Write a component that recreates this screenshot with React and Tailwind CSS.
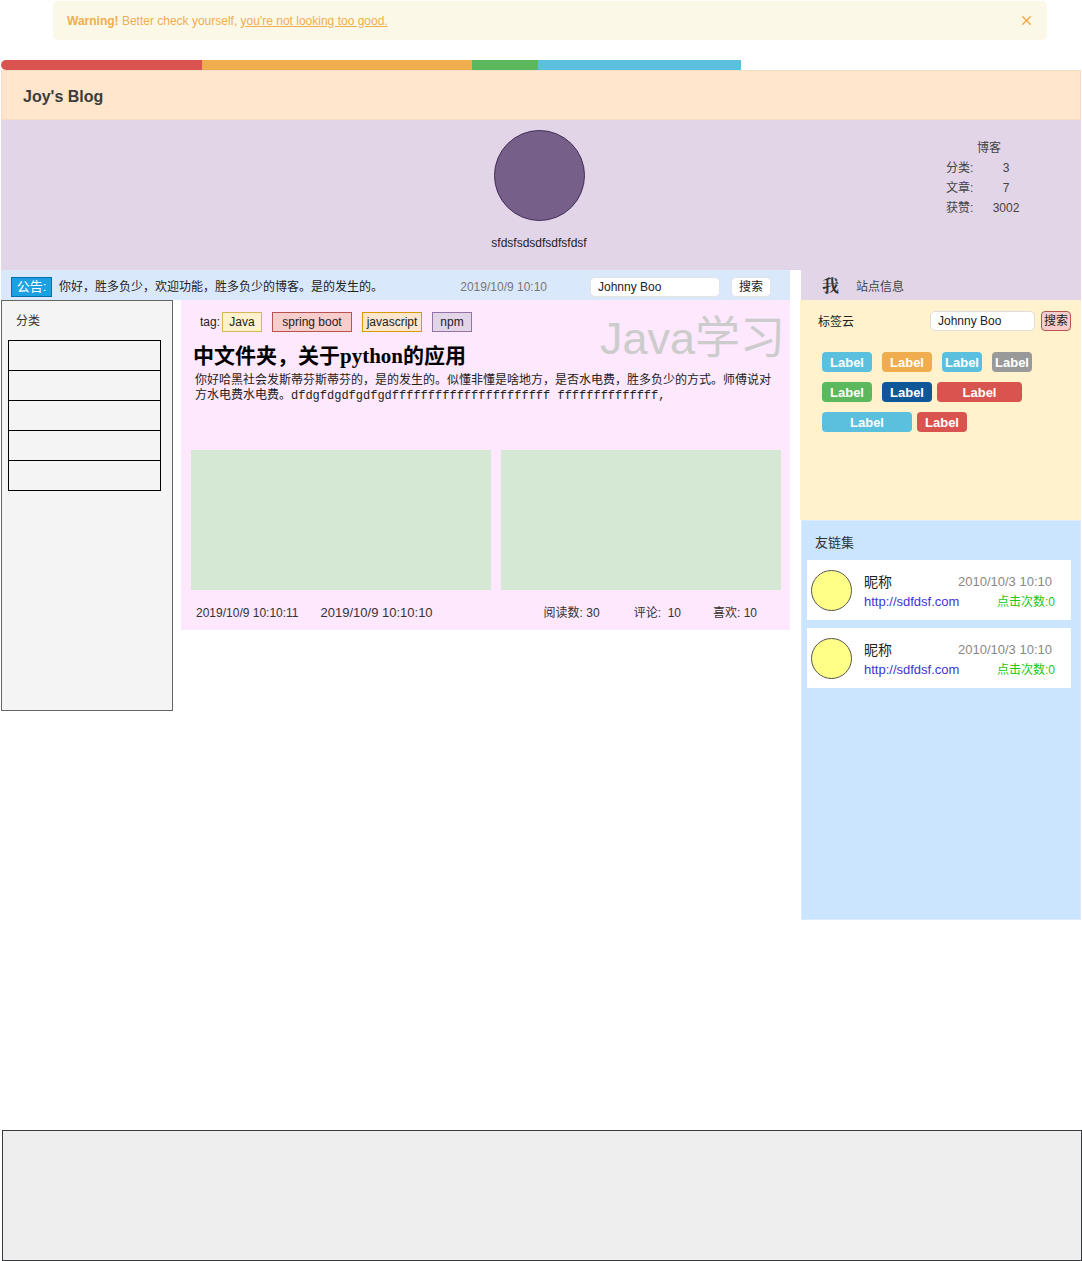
import { X } from 'lucide-react'

const SANS = "font-['Liberation_Sans','Noto_Sans_CJK_SC',sans-serif]"

const TAGS = [
  { text: 'Java', w: 'w-[40px]', cls: 'bg-[#fff2cc] border-[#d6b656]' },
  { text: 'spring boot', w: 'w-[80px]', cls: 'bg-[#f8cecc] border-[#b85450]' },
  { text: 'javascript', w: 'w-[60px]', cls: 'bg-[#ffe6cc] border-[#d79b00]' },
  { text: 'npm', w: 'w-[40px]', cls: 'bg-[#e1d5e7] border-[#9673a6]' },
]

const LABEL_ROWS = [
  [
    { w: 'w-[50px]', bg: 'bg-[#5bc0de]', ml: 'ml-0' },
    { w: 'w-[50px]', bg: 'bg-[#f0ad4e]', ml: 'ml-[10px]' },
    { w: 'w-[40px]', bg: 'bg-[#5bc0de]', ml: 'ml-[10px]' },
    { w: 'w-[40px]', bg: 'bg-[#999999]', ml: 'ml-[10px]' },
  ],
  [
    { w: 'w-[50px]', bg: 'bg-[#5cb85c]', ml: 'ml-0' },
    { w: 'w-[50px]', bg: 'bg-[#10579a]', ml: 'ml-[10px]' },
    { w: 'w-[85px]', bg: 'bg-[#d9534f]', ml: 'ml-[5px]' },
  ],
  [
    { w: 'w-[90px]', bg: 'bg-[#5bc0de]', ml: 'ml-0' },
    { w: 'w-[50px]', bg: 'bg-[#d9534f]', ml: 'ml-[5px]' },
  ],
]

function FriendCard() {
  return (
    <div className="h-[60px] bg-white flex items-center pl-[4px] pr-[16px]">
      <div className="w-[41px] h-[41px] rounded-full bg-[#ffff88] border border-[#555]" />
      <div className="flex-1 ml-[12px] flex flex-col pt-[4px]">
        <div className="flex items-center justify-between h-[20px]">
          <span className="text-[14px] text-[#222]">昵称</span>
          <span className="text-[13px] text-[#888] mr-[3px]">2010/10/3 10:10</span>
        </div>
        <div className="flex items-center justify-between h-[20px]">
          <span className="text-[13px] text-[#3b35d6]">http://sdfdsf.com</span>
          <span className="text-[12px] text-[#19c619]">点击次数:0</span>
        </div>
      </div>
    </div>
  )
}

export default function App() {
  return (
    <div className={`w-[1082px] min-h-[1261px] bg-white text-[#333] ${SANS}`}>
      {/* warning */}
      <div className="ml-[53px] mt-[1px] w-[994px] h-[39px] rounded-[5px] bg-[#fcf8e8] flex items-center justify-between pl-[14px] pr-[13px] text-[12px] text-[#f0ad4e]">
        <span>
          <b>Warning!</b> Better check yourself, <span className="underline">you're not looking too good.</span>
        </span>
        <X size={15} strokeWidth={2.5} />
      </div>

      {/* progress */}
      <div className="mt-[20px] ml-[1px] w-[740px] h-[10px] flex rounded-l-full overflow-hidden">
        <div className="w-[201px] bg-[#d9534f]" />
        <div className="w-[270px] bg-[#f0ad4e]" />
        <div className="w-[66px] bg-[#5cb85c]" />
        <div className="flex-1 bg-[#5bc0de]" />
      </div>

      {/* header */}
      <div className="ml-[1px] w-[1080px] h-[50px] bg-[#ffe6cc] border border-[#f7dcc5] flex items-center pl-[21px] pt-[3px] text-[16px] font-bold text-[#3c3c3c]">
        Joy's Blog
      </div>

      {/* banner */}
      <div className="ml-[1px] w-[1080px] h-[150px] bg-[#e1d5e7] flex">
        <div className="w-[448px]" />
        <div className="w-[180px] flex flex-col items-center pt-[10px]">
          <div className="w-[91px] h-[91px] rounded-full bg-[#76608a] border border-[#432d57]" />
          <div className="mt-[15px] text-[12px] leading-[14px] text-[#222]">sfdsfsdsdfsdfsfdsf</div>
        </div>
        <div className="ml-[317px] pt-[18px] text-[12px] text-[#444]">
          <div className="h-[20px] leading-[20px] text-center pl-[6px]">博客</div>
          {[['分类:', '3'], ['文章:', '7'], ['获赞:', '3002']].map(([k, v]) => (
            <div key={k} className="flex h-[20px] leading-[20px]">
              <span className="w-[40px]">{k}</span>
              <span className="w-[40px] text-center">{v}</span>
            </div>
          ))}
        </div>
      </div>

      {/* main */}
      <div className="flex ml-[1px]">
        <div className="w-[789px]">
          {/* notice */}
          <div className="h-[30px] bg-[#dae8fc] flex items-center pl-[10px] pr-[19px] pt-[4px]">
            <div className="w-[41px] h-[20px] bg-[#1ba1e2] border border-[#006eaf] text-white text-[13px] leading-[18px] text-center">公告:</div>
            <span className="ml-[7px] flex-1 text-[12px] text-[#222]">你好，胜多负少，欢迎功能，胜多负少的博客。是的发生的。</span>
            <span className="text-[12px] text-[#777]">2019/10/9 10:10</span>
            <div className="ml-[43px] w-[130px] h-[20px] rounded-[5px] bg-white border border-[#e3e3e3] text-[12px] leading-[18px] pl-[7px] text-[#222]">Johnny Boo</div>
            <div className="ml-[11px] w-[40px] h-[20px] rounded-[5px] bg-white border border-[#e3e3e3] text-[12px] leading-[18px] text-center text-[#222]">搜索</div>
          </div>

          <div className="flex items-start">
            {/* category sidebar */}
            <div className="w-[172px] h-[411px] bg-[#f4f4f4] border border-[#666]">
              <div className="pl-[14px] pt-[13px] text-[12px] leading-[14px] text-[#333]">分类</div>
              <div className="ml-[6px] mt-[12px] w-[153px] border-t border-x border-black">
                {[0, 1, 2, 3, 4].map((i) => (
                  <div key={i} className="h-[30px] border-b border-black" />
                ))}
              </div>
            </div>

            {/* article */}
            <div className="relative ml-[8px] w-[609px] h-[330px] bg-[#fde8fd]">
              <div className="absolute right-[5px] top-[12px] text-[45px] leading-[54px] text-[#cccccc]">Java学习</div>
              <div className="flex items-center pt-[12px] pl-[19px] text-[12px] text-[#222]">
                <span className="mr-[2px]">tag:</span>
                {TAGS.map((t, i) => (
                  <div key={t.text} className={`${t.w} ${t.cls} ${i > 0 ? 'ml-[10px]' : ''} h-[20px] border text-center leading-[18px]`}>
                    {t.text}
                  </div>
                ))}
              </div>
              <div className="mt-[12px] ml-[12px] text-[21px] leading-[24px] font-bold text-black font-['Liberation_Serif','Noto_Sans_CJK_SC',serif]">
                中文件夹，关于python的应用
              </div>
              <div className="ml-[14px] mt-[6px] text-[12px] leading-[15px] text-[#222] font-['Liberation_Mono','Noto_Sans_CJK_SC',monospace] whitespace-nowrap">
                你好哈黑社会发斯蒂芬斯蒂芬的，是的发生的。似懂非懂是啥地方，是否水电费，胜多负少的方式。师傅说对
                <br />
                方水电费水电费。dfdgfdgdfgdfgdffffffffffffffffffffff ffffffffffffff,
              </div>
              <div className="flex pl-[10px] mt-[46px]">
                <div className="w-[300px] h-[140px] bg-[#d5e8d4]" />
                <div className="ml-[10px] w-[280px] h-[140px] bg-[#d5e8d4]" />
              </div>
              <div className="flex items-center mt-[15px] h-[16px] text-[#333]">
                <span className="ml-[15px] text-[12px]">2019/10/9 10:10:11</span>
                <span className="ml-[22px] text-[13px]">2019/10/9 10:10:10</span>
                <span className="ml-[111px] text-[12px]">阅读数: 30</span>
                <span className="ml-[34px] text-[12px]">评论:&nbsp;&nbsp;10</span>
                <span className="ml-[32px] text-[12px]">喜欢: 10</span>
              </div>
            </div>
          </div>
        </div>

        {/* right column */}
        <div className="ml-[10px] w-[281px]">
          <div className="ml-[1px] h-[30px] bg-[#e1d5e7] flex items-center pl-[21px] pt-[4px]">
            <span className="text-[17px] font-bold text-[#333] font-['Liberation_Serif','Noto_Serif_CJK_SC','Noto_Sans_CJK_SC',serif]">我</span>
            <span className="ml-[17px] text-[12px] text-[#444]">站点信息</span>
          </div>

          <div className="h-[220px] bg-[#fff2cc]">
            <div className="flex items-center pt-[11px] pl-[18px] pr-[10px]">
              <span className="text-[12px] text-[#222] pt-[2px]">标签云</span>
              <div className="ml-auto w-[105px] h-[20px] rounded-[5px] bg-white border border-[#ddd] text-[12px] leading-[18px] pl-[7px] text-[#222]">Johnny Boo</div>
              <div className="ml-[6px] w-[30px] h-[20px] rounded-[4px] bg-[#f8cecc] border border-[#b85450] text-[12px] leading-[18px] text-center text-[#222]">搜索</div>
            </div>
            <div className="pl-[22px] mt-[21px] flex flex-col gap-[10px]">
              {LABEL_ROWS.map((row, ri) => (
                <div key={ri} className="flex">
                  {row.map((l, li) => (
                    <div key={li} className={`${l.w} ${l.bg} ${l.ml} h-[20px] rounded-[4px] text-white font-bold text-[13px] leading-[21px] text-center`}>
                      Label
                    </div>
                  ))}
                </div>
              ))}
            </div>
          </div>

          <div className="ml-[1px] h-[400px] bg-[#cce5ff] border border-[#dbeafc] pt-[14px]">
            <div className="pl-[13px] text-[13px] leading-[16px] text-[#333]">友链集</div>
            <div className="ml-[5px] mr-[9px] mt-[9px] flex flex-col gap-[8px]">
              <FriendCard />
              <FriendCard />
            </div>
          </div>
        </div>
      </div>

      {/* footer */}
      <div className="mt-[210px] ml-[2px] w-[1080px] h-[131px] bg-[#eeeeee] border border-[#36393d]" />
    </div>
  )
}
